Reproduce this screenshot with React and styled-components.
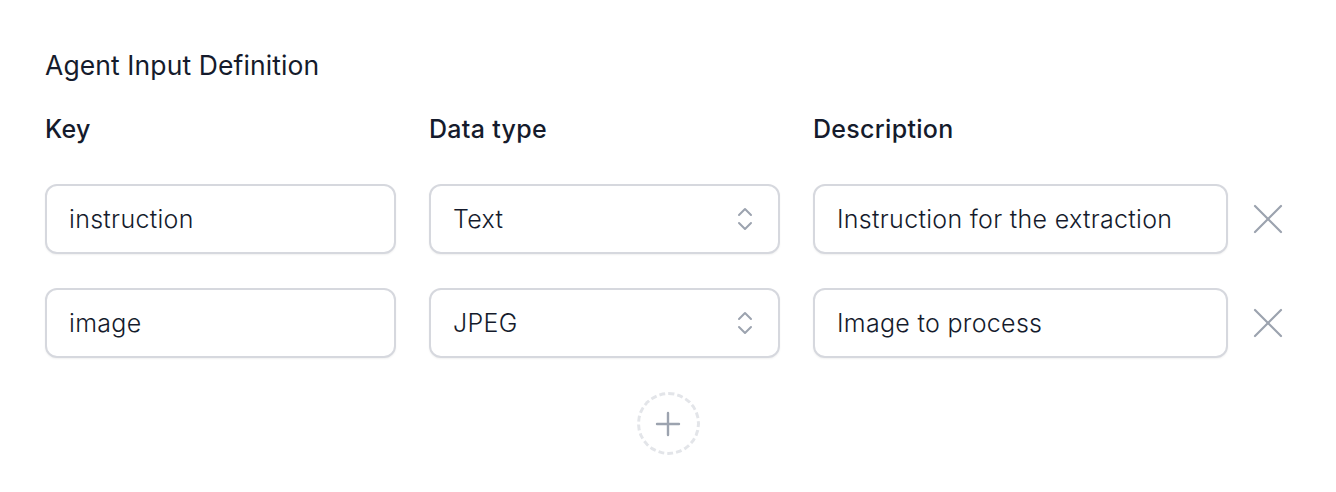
import { createGlobalStyle } from "styled-components";
import styled from "styled-components";

const GlobalStyle = createGlobalStyle`
  html, body {
    margin: 0;
    padding: 0;
    background: #ffffff;
  }
  body {
    font-family: Inter, "Noto Sans", sans-serif;
    color: #111827;
  }
`;

const Wrapper = styled.div`
  padding: 48px 45px 0 45px;
  width: 1336px;
  box-sizing: border-box;
`;

const Title = styled.h2`
  margin: 0;
  font-size: 26.5px;
  font-weight: 400;
  line-height: 34px;
  letter-spacing: 0.1px;
  color: #151b2c;
`;

const Grid = styled.div`
  display: grid;
  grid-template-columns: 351px 351px 415px 54px;
  column-gap: 33px;
  row-gap: 34px;
  margin-top: 30px;
  align-items: center;
`;

const Label = styled.div`
  font-size: 25px;
  font-weight: 500;
  line-height: 34px;
  letter-spacing: 0.3px;
  color: #151b2c;
  margin-bottom: 4px;
`;

const Field = styled.div`
  height: 70px;
  box-sizing: border-box;
  border: 2px solid #d6d8de;
  border-radius: 12px;
  box-shadow: 0 1px 2px rgba(0, 0, 0, 0.06);
  display: flex;
  align-items: center;
  justify-content: space-between;
  padding: 0 22px;
  font-size: 25px;
  font-weight: 350;
  letter-spacing: 0.3px;
  color: #151b2c;
  background: #fff;
`;

const Chevrons = styled.svg`
  width: 22px;
  height: 30px;
`;

const RemoveButton = styled.button`
  border: none;
  background: none;
  padding: 0;
  margin-left: -11px;
  width: 36px;
  height: 36px;
  display: flex;
  align-items: center;
  justify-content: center;
  cursor: pointer;
`;

const AddRow = styled.div`
  display: flex;
  justify-content: center;
  margin-top: 34px;
  width: 1246px;
`;

const AddButton = styled.button`
  width: 63px;
  height: 63px;
  box-sizing: border-box;
  border-radius: 50%;
  border: 3px dashed #e3e5e9;
  background: none;
  display: flex;
  align-items: center;
  justify-content: center;
  padding: 0;
  cursor: pointer;
`;

const rows = [
  { key: "instruction", type: "Text", desc: "Instruction for the extraction" },
  { key: "image", type: "JPEG", desc: "Image to process" },
];

const SelectArrows = () => (
  <Chevrons viewBox="0 0 22 30" fill="none" stroke="#9ca3af" strokeWidth="2" strokeLinecap="round" strokeLinejoin="round">
    <polyline points="5,11 11,5 17,11" />
    <polyline points="5,19 11,25 17,19" />
  </Chevrons>
);

const CloseIcon = () => (
  <svg width="30" height="30" viewBox="0 0 30 30" fill="none" stroke="#9ca3af" strokeWidth="2.2" strokeLinecap="round">
    <line x1="2" y1="2" x2="28" y2="28" />
    <line x1="28" y1="2" x2="2" y2="28" />
  </svg>
);

const PlusIcon = () => (
  <svg width="26" height="26" viewBox="0 0 26 26" fill="none" stroke="#9ca3af" strokeWidth="2.4" strokeLinecap="round">
    <line x1="13" y1="2" x2="13" y2="24" />
    <line x1="2" y1="13" x2="24" y2="13" />
  </svg>
);

const Row = ({ row }) => (
  <>
    <Field>{row.key}</Field>
    <Field>
      {row.type}
      <SelectArrows />
    </Field>
    <Field>{row.desc}</Field>
    <RemoveButton>
      <CloseIcon />
    </RemoveButton>
  </>
);

export default function App() {
  return (
    <>
      <GlobalStyle />
      <Wrapper>
        <Title>Agent Input Definition</Title>
        <Grid>
          <Label>Key</Label>
          <Label>Data type</Label>
          <Label>Description</Label>
          <div />
          {rows.map((row) => (
            <Row key={row.key} row={row} />
          ))}
        </Grid>
        <AddRow>
          <AddButton>
            <PlusIcon />
          </AddButton>
        </AddRow>
      </Wrapper>
    </>
  );
}
